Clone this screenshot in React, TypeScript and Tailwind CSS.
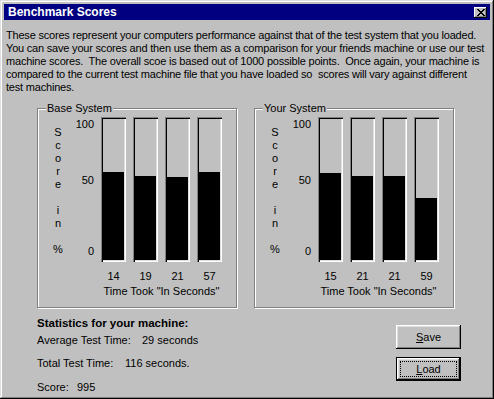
import React from "react";

const font = { fontFamily: '"Liberation Sans", Arial, sans-serif' };

const base = [
  { time: 14, fill: 88 },
  { time: 19, fill: 84 },
  { time: 21, fill: 83 },
  { time: 57, fill: 88 },
];

const yours = [
  { time: 15, fill: 87 },
  { time: 21, fill: 84 },
  { time: 21, fill: 84 },
  { time: 59, fill: 62 },
];

// classic 8x7 bitmap "x" for the close box
const closeRows = ["11000011", "01100110", "00111100", "00011000", "00111100", "01100110", "11000011"];

const CloseGlyph = () => (
  <svg width="8" height="7" viewBox="0 0 8 7" shapeRendering="crispEdges">
    {closeRows.map((row, y) =>
      row.split("").map((c, x) =>
        c === "1" ? <rect key={`${x}-${y}`} x={x} y={y} width="1" height="1" fill="#000" /> : null
      )
    )}
  </svg>
);

const Bar = ({ fill }: { fill: number }) => (
  <div className="w-[25px] h-[145px] p-[2px] flex flex-col justify-end bg-[#c0c0c0] shadow-[inset_1px_1px_#808080,inset_2px_2px_#000,inset_-1px_-1px_#fff,inset_-2px_-2px_#dfdfdf]">
    <div className="bg-black" style={{ height: fill }} />
  </div>
);

const GroupBox = ({ title, data }: { title: string; data: { time: number; fill: number }[] }) => (
  <div className="relative w-[200px] h-[200px] border border-[#808080] shadow-[inset_1px_1px_#fff,1px_1px_#fff]">
    <span className="absolute -top-[7px] left-[8px] bg-[#c0c0c0] px-[1px] leading-[13px]">{title}</span>
    <div className="flex">
      <div className="ml-[13px] w-[14px] mt-[17px] flex flex-col items-center leading-[13px]">
        {["S", "c", "o", "r", "e", "", "i", "n", "", "%"].map((ch, i) => (
          <span key={i} className="h-[13px]">{ch}</span>
        ))}
      </div>
      <div className="w-[29px] flex flex-col items-end leading-[13px]">
        <span className="mt-[9px]">100</span>
        <span className="mt-[43px]">50</span>
        <span className="mt-[58px]">0</span>
      </div>
      <div className="ml-[7px] mt-[8px] flex flex-col">
        <div className="flex gap-[7px]">
          {data.map((d, i) => (
            <Bar key={i} fill={d.fill} />
          ))}
        </div>
        <div className="flex gap-[7px] mt-[8px] leading-[13px]">
          {data.map((d, i) => (
            <span key={i} className="w-[25px] text-center">{d.time}</span>
          ))}
        </div>
        <div className="mt-[2px] text-center leading-[13px] whitespace-nowrap">Time Took "In Seconds"</div>
      </div>
    </div>
  </div>
);

export default function App() {
  return (
    <div
      style={font}
      className="w-[494px] h-[399px] overflow-hidden p-[4px] bg-[#c0c0c0] text-[11px] text-black shadow-[inset_-1px_-1px_#000,inset_1px_1px_#dfdfdf,inset_-2px_-2px_#808080,inset_2px_2px_#fff]"
    >
      <div className="h-[16px] bg-[#000080] flex items-center justify-between pl-[4px] pr-[3px]">
        <span className="text-white font-bold text-[12px] leading-[16px]">Benchmark Scores</span>
        <button className="w-[13px] h-[11px] flex items-center justify-center bg-[#c0c0c0] shadow-[inset_-1px_-1px_#000,inset_1px_1px_#fff,inset_-2px_-2px_#808080]">
          <CloseGlyph />
        </button>
      </div>

      <p className="mt-[9px] pl-[2px] leading-[13px] whitespace-nowrap tracking-[-0.2px]">
        These scores represent your computers performance against that of the test system that you loaded.
        <br />
        You can save your scores and then use them as a comparison for your friends machine or use our test
        <br />
        machine scores.&nbsp; The overall scoe is based out of 1000 possible points.&nbsp; Once again, your machine is
        <br />
        compared to the current test machine file that you have loaded so&nbsp; scores will vary against different
        <br />
        test machines.
      </p>

      <div className="flex gap-[17px] ml-[33px] mt-[14px]">
        <GroupBox title="Base System" data={base} />
        <GroupBox title="Your System" data={yours} />
      </div>

      <div className="flex justify-between ml-[33px] mr-[29px] mt-[9px]">
        <div className="leading-[13px] whitespace-nowrap">
          <div className="font-bold text-[11.5px]">Statistics for your machine:</div>
          <div className="mt-[4px]">
            <span className="inline-block w-[105px]">Average Test Time:</span>29 seconds
          </div>
          <div className="mt-[10px]">
            <span className="inline-block w-[88px]">Total Test Time:</span>116 seconds.
          </div>
          <div className="mt-[11px]">
            <span className="inline-block w-[40px]">Score:</span>995
          </div>
        </div>
        <div className="flex flex-col gap-[8px] mt-[8px]">
          <button className="w-[65px] h-[24px] bg-[#c0c0c0] shadow-[inset_-1px_-1px_#000,inset_1px_1px_#fff,inset_-2px_-2px_#808080,inset_2px_2px_#dfdfdf]">
            <span className="underline">S</span>ave
          </button>
          <button className="relative w-[65px] h-[24px] border border-black bg-[#c0c0c0] shadow-[inset_-1px_-1px_#000,inset_1px_1px_#fff,inset_-2px_-2px_#808080,inset_2px_2px_#dfdfdf]">
            <span className="absolute inset-[3px] border border-dotted border-black" />
            <span className="underline">L</span>oad
          </button>
        </div>
      </div>
    </div>
  );
}
